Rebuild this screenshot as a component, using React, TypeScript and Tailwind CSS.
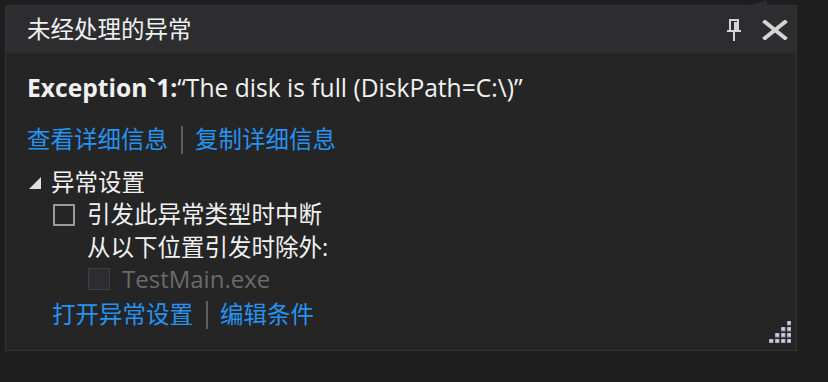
import React from 'react';

const FONT = { fontFamily: '"Open Sans", "Noto Sans CJK SC", sans-serif' };

function PinIcon() {
  return (
    <svg width="14" height="22" viewBox="0 0 14 22" className="text-[#d4d4d4]">
      <rect x="3" y="1" width="8" height="11" fill="none" stroke="currentColor" strokeWidth="2" />
      <rect x="7" y="3" width="3" height="8" fill="currentColor" />
      <rect x="0" y="11" width="14" height="2" fill="currentColor" />
      <rect x="6" y="12" width="2" height="10" fill="currentColor" />
    </svg>
  );
}

function CloseIcon() {
  return (
    <svg width="26" height="20" viewBox="0 0 26 20" className="text-[#d4d4d4]">
      <path d="M3 2 L23 18 M23 2 L3 18" stroke="currentColor" strokeWidth="4" strokeLinecap="square" />
    </svg>
  );
}

function Grip() {
  const dots: [number, number][] = [];
  for (let r = 0; r < 4; r++) {
    for (let c = 3 - r; c < 4; c++) dots.push([c, r]);
  }
  return (
    <svg width="24" height="24" viewBox="0 0 24 24" className="absolute left-[761px] top-[313px]">
      <defs>
        <radialGradient id="dot" cx="50%" cy="40%" r="60%">
          <stop offset="0%" stopColor="#e4e7f0" />
          <stop offset="100%" stopColor="#8a90a6" />
        </radialGradient>
      </defs>
      {dots.map(([c, r]) => (
        <rect key={`${c}-${r}`} x={2 + c * 6} y={2 + r * 6} width="4.5" height="4.5" fill="url(#dot)" />
      ))}
    </svg>
  );
}

function Sep() {
  return <span className="ml-[13px] mr-[12px] inline-block h-[28px] w-[2px] bg-[#5f5f62]" />;
}

export default function App() {
  return (
    <div className="relative h-[382px] w-[828px] overflow-hidden bg-[#1e1e1e] pl-[5px] pt-[5px]" style={FONT}>
      <div className="relative h-[346px] w-[792px] border border-[#343437] bg-[#252526] text-[23.5px] text-[#f1f1f1]">
        {/* callout tail */}
        <svg width="22" height="6" viewBox="0 0 22 6" className="absolute left-[741px] top-[-6px]">
          <polygon points="0,6 20,0 20,6" fill="#2d2d30" />
        </svg>

        {/* header */}
        <div className="flex h-[47px] items-center bg-[#2d2d30] pl-[21px] pr-[8px]">
          <span className="leading-none">未经处理的异常</span>
          <div className="ml-auto flex items-center gap-[21px]">
            <PinIcon />
            <CloseIcon />
          </div>
        </div>

        {/* body */}
        <div className="flex flex-col pl-[21px]">
          <div className="mt-[19px] flex h-[32px] items-center whitespace-nowrap text-[24.6px]">
            <span className="font-bold">Exception`1:</span>
            <span>“The disk is full (DiskPath=C:\)”</span>
          </div>

          <div className="mt-[20px] flex h-[32px] items-center text-[#2593f1]">
            <span>查看详细信息</span>
            <Sep />
            <span>复制详细信息</span>
          </div>

          <div className="mt-[11px] flex h-[32px] items-center">
            <svg width="13" height="13" viewBox="0 0 13 13" className="ml-[2px] mr-[9px]">
              <polygon points="12,0 12,12 0,12" fill="#e0e0e0" />
            </svg>
            <span>异常设置</span>
          </div>

          <div className="flex h-[32px] items-center pl-[26px]">
            <span className="mr-[12px] box-border h-[22px] w-[22px] border-2 border-[#9a9a9a] bg-[#252526]" />
            <span>引发此异常类型时中断</span>
          </div>

          <div className="flex h-[33px] items-center pl-[60px]">
            <span>从以下位置引发时除外:</span>
          </div>

          <div className="flex h-[30px] items-center pl-[61px] text-[#6a6a6a]">
            <span className="mr-[12px] box-border h-[22px] w-[22px] border border-[#3e3e42] bg-[#2d2d30]" />
            <span className="text-[24px]">TestMain.exe</span>
          </div>

          <div className="mt-[5px] flex h-[32px] items-center pl-[25px] text-[#2593f1]">
            <span>打开异常设置</span>
            <Sep />
            <span>编辑条件</span>
          </div>
        </div>

        <Grip />
      </div>
    </div>
  );
}
